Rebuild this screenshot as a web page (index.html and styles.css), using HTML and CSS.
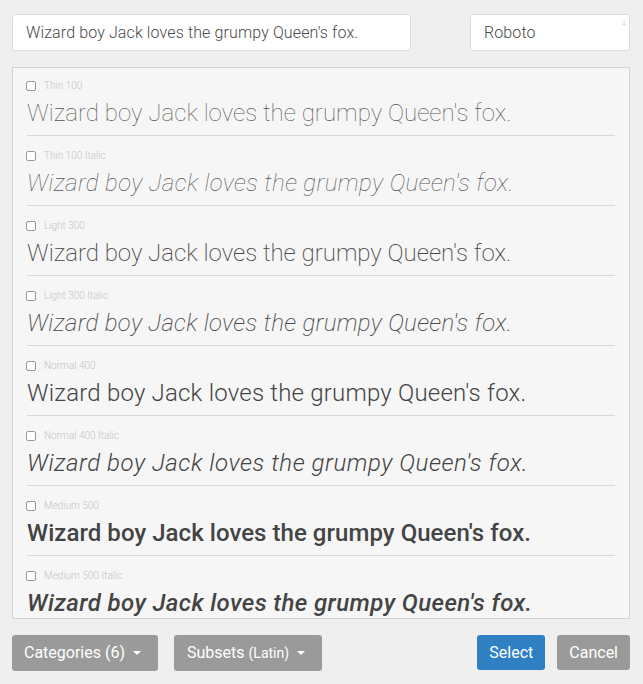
FILE: index.html
```html
<!DOCTYPE html>
<html>
<head>
<meta charset="utf-8">
<link rel="stylesheet" href="styles.css">
</head>
<body>
<div class="page">
  <div class="topbar">
    <div class="field field-text">Wizard boy Jack loves the grumpy Queen's fox.</div>
    <div class="field field-font">Roboto<span class="count">4</span></div>
  </div>
  <div class="list">
    <div class="row">
      <div class="label"><span class="cb"></span>Thin 100</div>
      <div class="sample w100">Wizard boy Jack loves the grumpy Queen's fox.</div>
    </div>
    <div class="row">
      <div class="label"><span class="cb"></span>Thin 100 Italic</div>
      <div class="sample w100 it">Wizard boy Jack loves the grumpy Queen's fox.</div>
    </div>
    <div class="row">
      <div class="label"><span class="cb"></span>Light 300</div>
      <div class="sample w300">Wizard boy Jack loves the grumpy Queen's fox.</div>
    </div>
    <div class="row">
      <div class="label"><span class="cb"></span>Light 300 Italic</div>
      <div class="sample w300 it">Wizard boy Jack loves the grumpy Queen's fox.</div>
    </div>
    <div class="row">
      <div class="label"><span class="cb"></span>Normal 400</div>
      <div class="sample w400">Wizard boy Jack loves the grumpy Queen's fox.</div>
    </div>
    <div class="row">
      <div class="label"><span class="cb"></span>Normal 400 Italic</div>
      <div class="sample w400 it">Wizard boy Jack loves the grumpy Queen's fox.</div>
    </div>
    <div class="row">
      <div class="label"><span class="cb"></span>Medium 500</div>
      <div class="sample w500">Wizard boy Jack loves the grumpy Queen's fox.</div>
    </div>
    <div class="row">
      <div class="label"><span class="cb"></span>Medium 500 Italic</div>
      <div class="sample w500 it">Wizard boy Jack loves the grumpy Queen's fox.</div>
    </div>
  </div>
  <div class="bottombar">
    <div class="group">
      <div class="btn btn-gray btn-cat">Categories (6)<span class="caret"></span></div>
      <div class="btn btn-gray btn-sub">Subsets <span class="small">(Latin)</span><span class="caret"></span></div>
    </div>
    <div class="group group-right">
      <div class="btn btn-blue">Select</div>
      <div class="btn btn-gray btn-cancel">Cancel</div>
    </div>
  </div>
</div>
</body>
</html>
```

FILE: styles.css
```css
html, body {
  margin: 0;
  padding: 0;
  background: #efefef;
}
body {
  font-family: Roboto, "Liberation Sans", sans-serif;
  color: #444;
}
.page {
  width: 643px;
  height: 684px;
  padding: 14px 13px 0 12px;
  box-sizing: border-box;
}
.topbar {
  display: flex;
  justify-content: space-between;
}
.field {
  position: relative;
  height: 37px;
  box-sizing: border-box;
  background: #fff;
  border: 1px solid #dcdcdc;
  border-radius: 3px;
  padding: 0 13px;
  font-size: 16px;
  font-weight: 350;
  letter-spacing: 0.12px;
  line-height: 35px;
  color: #4a4a4a;
}
.field-text {
  width: 399px;
}
.field-font {
  width: 160px;
}
.count {
  position: absolute;
  top: 4px;
  right: 3px;
  font-size: 8px;
  line-height: 10px;
  color: #b9dcd3;
}
.list {
  margin-top: 16px;
  height: 552px;
  box-sizing: border-box;
  border: 1px solid #d2d2d2;
  background: #f6f6f6;
  overflow: hidden;
}
.row {
  margin: 0 14px;
  padding: 14px 0 6px;
  border-bottom: 1px solid #d9d9d9;
}
.row:first-child {
  padding-top: 12px;
}
.label {
  display: flex;
  align-items: center;
  height: 12px;
  font-size: 10px;
  line-height: 12px;
  color: #c4c4c4;
  font-weight: 300;
}
.cb {
  width: 8px;
  height: 8px;
  margin-left: -1px;
  margin-right: 8px;
  border: 1px solid #9a9a9a;
  border-radius: 2px;
  background: #fff;
}
.sample {
  margin-top: 5px;
  font-size: 24px;
  line-height: 32px;
  white-space: nowrap;
  color: #444;
}
.w100 { font-weight: 100; color: #555; letter-spacing: 0.04px; }
.w300 { font-weight: 200; color: #4a4a4a; letter-spacing: -0.03px; }
.w400 { font-weight: 350; letter-spacing: 0.2px; }
.w500 { font-weight: 470; letter-spacing: 0.05px; }
.it { font-style: italic; }
.w100.it { font-weight: 150; letter-spacing: 0.4px; }
.w300.it { font-weight: 200; letter-spacing: 0.3px; }
.w400.it { font-weight: 340; letter-spacing: 0.55px; }
.w500.it { font-weight: 460; letter-spacing: 0.4px; }
.bottombar {
  margin-top: 16px;
  display: flex;
  justify-content: space-between;
  align-items: flex-start;
}
.group {
  display: flex;
  gap: 16px;
}
.group-right {
  gap: 12px;
}
.btn {
  display: flex;
  align-items: center;
  height: 36px;
  box-sizing: border-box;
  border-radius: 3px;
  color: #fff;
  font-size: 16px;
  font-weight: 380;
  line-height: 20px;
  padding: 0 12px;
}
.btn-gray {
  background: #9a9a9a;
}
.btn-blue {
  background: #2f80c3;
  height: 35px;
}
.btn-cancel {
  height: 35px;
}
.btn-cat {
  padding-right: 17px;
}
.btn-sub {
  padding-left: 13px;
  padding-right: 17px;
}
.small {
  font-size: 14px;
  margin-left: 4px;
}
.caret {
  width: 0;
  height: 0;
  margin-left: 8px;
  border-left: 4px solid transparent;
  border-right: 4px solid transparent;
  border-top: 4px solid #fff;
}
```
